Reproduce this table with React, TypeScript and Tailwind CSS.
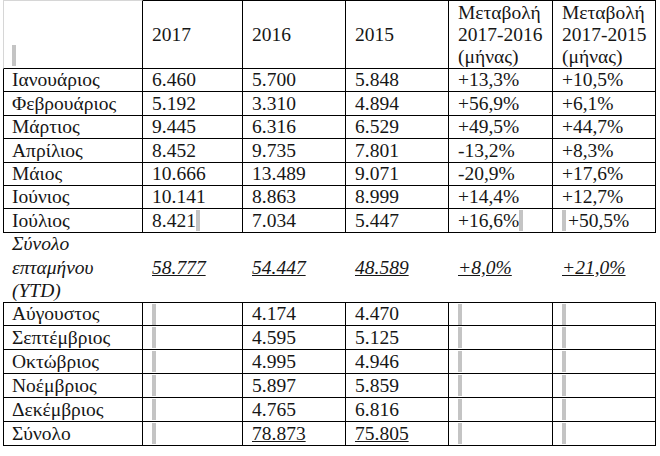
import React from "react";

type Row = {
  label: string;
  v17: string;
  v16: string;
  v15: string;
  d16: string;
  d15: string;
  h: string;
};

const months: Row[] = [
  { label: "Ιανουάριος", v17: "6.460", v16: "5.700", v15: "5.848", d16: "+13,3%", d15: "+10,5%", h: "h-[23px]" },
  { label: "Φεβρουάριος", v17: "5.192", v16: "3.310", v15: "4.894", d16: "+56,9%", d15: "+6,1%", h: "h-[24px]" },
  { label: "Μάρτιος", v17: "9.445", v16: "6.316", v15: "6.529", d16: "+49,5%", d15: "+44,7%", h: "h-[23px]" },
  { label: "Απρίλιος", v17: "8.452", v16: "9.735", v15: "7.801", d16: "-13,2%", d15: "+8,3%", h: "h-[24px]" },
  { label: "Μάιος", v17: "10.666", v16: "13.489", v15: "9.071", d16: "-20,9%", d15: "+17,6%", h: "h-[23px]" },
  { label: "Ιούνιος", v17: "10.141", v16: "8.863", v15: "8.999", d16: "+14,4%", d15: "+12,7%", h: "h-[23px]" },
];

const rest = [
  { label: "Αύγουστος", v16: "4.174", v15: "4.470" },
  { label: "Σεπτέμβριος", v16: "4.595", v15: "5.125" },
  { label: "Οκτώβριος", v16: "4.995", v15: "4.946" },
  { label: "Νοέμβριος", v16: "5.897", v15: "5.859" },
  { label: "Δεκέμβριος", v16: "4.765", v15: "6.816" },
];

// the grey marks Word leaves in the cells
function Mark() {
  return <span className="inline-block w-[4px] h-[21px] bg-[#c4c4c4] align-middle" />;
}

function Cell({
  children,
  first,
  className = "",
}: {
  children?: React.ReactNode;
  first?: boolean;
  className?: string;
}) {
  return (
    <div
      className={`flex items-center border-r border-b border-black whitespace-nowrap ${
        first ? "border-l pl-2" : "pl-[9px]"
      } ${className}`}
    >
      {children}
    </div>
  );
}

export default function App() {
  return (
    <div className="w-[660px] h-[456px] bg-white overflow-hidden pl-[3px] text-[#161616] text-[19.5px] leading-[22px] [font-family:Liberation_Serif,Times_New_Roman,serif]">
      <div className="grid grid-cols-[140px_100px_103px_103px_104px_103px]">
        {/* header */}
        <div className="flex items-end h-[69px] border-t border-l border-t-[#d6d6d6] border-l-[#d6d6d6] border-r border-b border-black pl-2 pb-[2px]">
          <Mark />
        </div>
        <Cell className="h-[69px] border-t">2017</Cell>
        <Cell className="h-[69px] border-t">2016</Cell>
        <Cell className="h-[69px] border-t">2015</Cell>
        <Cell className="h-[69px] border-t whitespace-normal">
          <span>
            Μεταβολή
            <br />
            2017-2016
            <br />
            (μήνας)
          </span>
        </Cell>
        <Cell className="h-[69px] border-t whitespace-normal">
          <span>
            Μεταβολή
            <br />
            2017-2015
            <br />
            (μήνας)
          </span>
        </Cell>

        {months.map((r) => (
          <React.Fragment key={r.label}>
            <Cell first className={r.h}>{r.label}</Cell>
            <Cell className={r.h}>{r.v17}</Cell>
            <Cell className={r.h}>{r.v16}</Cell>
            <Cell className={r.h}>{r.v15}</Cell>
            <Cell className={r.h}>{r.d16}</Cell>
            <Cell className={r.h}>{r.d15}</Cell>
          </React.Fragment>
        ))}

        {/* Ιούλιος */}
        <Cell first className="h-[24px]">Ιούλιος</Cell>
        <Cell className="h-[24px]">
          8.421
          <Mark />
        </Cell>
        <Cell className="h-[24px]">7.034</Cell>
        <Cell className="h-[24px]">5.447</Cell>
        <Cell className="h-[24px]">
          +16,6%
          <Mark />
        </Cell>
        <Cell className="h-[24px]">
          <Mark />
          <span className="ml-[2px]">+50,5%</span>
        </Cell>

        {/* YTD row without borders */}
        <div className="h-[69px] flex items-center pl-[9px] italic leading-[23.5px]">
          <span>
            Σύνολο
            <br />
            επταμήνου
            <br />
            (YTD)
          </span>
        </div>
        <div className="h-[69px] flex items-center pl-[9px] italic underline">58.777</div>
        <div className="h-[69px] flex items-center pl-[9px] italic underline">54.447</div>
        <div className="h-[69px] flex items-center pl-[9px] italic underline">48.589</div>
        <div className="h-[69px] flex items-center pl-[9px] italic underline">+8,0%</div>
        <div className="h-[69px] flex items-center pl-[9px] italic underline">+21,0%</div>

        {rest.map((r, i) => {
          const t = i === 0 ? "border-t h-[24px]" : "h-[24px]";
          return (
            <React.Fragment key={r.label}>
              <Cell first className={t}>{r.label}</Cell>
              <Cell className={t}>
                <Mark />
              </Cell>
              <Cell className={t}>{r.v16}</Cell>
              <Cell className={t}>{r.v15}</Cell>
              <Cell className={t}>
                <Mark />
              </Cell>
              <Cell className={t}>
                <Mark />
              </Cell>
            </React.Fragment>
          );
        })}

        {/* Σύνολο row, grid lines only */}
        <Cell first className="h-[24px] border-[#d6d6d6]">Σύνολο</Cell>
        <Cell className="h-[24px] border-[#d6d6d6]">
          <Mark />
        </Cell>
        <Cell className="h-[24px] border-[#d6d6d6]">
          <span className="underline">78.873</span>
        </Cell>
        <Cell className="h-[24px] border-[#d6d6d6]">
          <span className="underline">75.805</span>
        </Cell>
        <Cell className="h-[24px] border-[#d6d6d6]">
          <Mark />
        </Cell>
        <Cell className="h-[24px] border-[#d6d6d6]">
          <Mark />
        </Cell>
      </div>
    </div>
  );
}
